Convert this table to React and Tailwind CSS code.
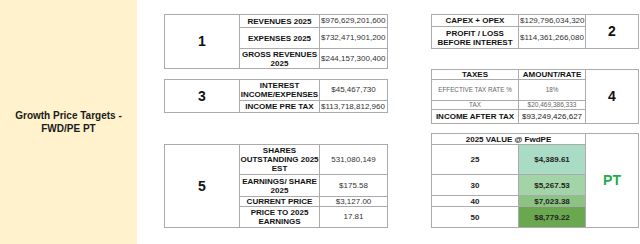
import React from 'react';

const Cell = ({ children, bg = 'bg-white', className = '' }) => (
    <div className={`${bg} flex items-center overflow-hidden whitespace-nowrap ${className}`}>
        {children}
    </div>
);

const Label = ({ children, bg, className = '' }) => (
    <Cell bg={bg} className={`justify-center text-center font-bold text-[8px] leading-[9px] ${className || 'text-[#111]'}`}>
        <span>{children}</span>
    </Cell>
);

const Value = ({ children, center, className = '' }) => (
    <Cell className={`text-[8px] ${center ? 'justify-center' : 'justify-start pl-px'} ${className || 'text-[#333]'}`}>
        {children}
    </Cell>
);

const Big = ({ children, className = '' }) => (
    <Cell className={`justify-center font-bold text-[14px] text-[#111] ${className}`}>{children}</Cell>
);

const App = () => {
    const fwdPe = [
        { pe: '25', value: '$4,389.61', bg: 'bg-[#aadcc5]' },
        { pe: '30', value: '$5,267.53', bg: 'bg-[#a3d4a8]' },
        { pe: '40', value: '$7,023.38', bg: 'bg-[#8cc282]' },
        { pe: '50', value: '$8,779.22', bg: 'bg-[#6aa84f]' },
    ];

    return (
        <div className="flex w-[640px] h-[244px] bg-white font-['Liberation_Sans',Arial,sans-serif]">
            {/* title strip */}
            <div className="w-[137px] h-full bg-[#fff2cc] flex items-center justify-center text-center">
                <p className="text-[10px] font-bold leading-[13px] text-[#1a1a1a]">
                    Growth Price Targets -<br />FWD/PE PT
                </p>
            </div>

            {/* left column */}
            <div className="ml-[27px] w-[224px] pt-[14px] flex flex-col">
                <div className="grid grid-cols-[74px_79px_67px] grid-rows-[12px_20px_19px] gap-px p-px bg-[#ababab]">
                    <Big className="row-span-3">1</Big>
                    <Label>REVENUES 2025</Label>
                    <Value>$976,629,201,600</Value>
                    <Label>EXPENSES 2025</Label>
                    <Value>$732,471,901,200</Value>
                    <Label>GROSS REVENUES<br />2025</Label>
                    <Value>$244,157,300,400</Value>
                </div>

                <div className="mt-[10px] grid grid-cols-[74px_79px_67px] grid-rows-[20px_11px] gap-px p-px bg-[#ababab]">
                    <Big className="row-span-2">3</Big>
                    <Label>INTEREST<br />INCOME/EXPENSES</Label>
                    <Value center>$45,467,730</Value>
                    <Label>INCOME PRE TAX</Label>
                    <Value>$113,718,812,960</Value>
                </div>

                <div className="mt-[31px] grid grid-cols-[74px_79px_67px] grid-rows-[29px_21px_9px_20px] gap-px p-px bg-[#ababab]">
                    <Big className="row-span-4">5</Big>
                    <Label>SHARES<br />OUTSTANDING 2025<br />EST</Label>
                    <Value center>531,080,149</Value>
                    <Label>EARNINGS/ SHARE<br />2025</Label>
                    <Value center>$175.58</Value>
                    <Label>CURRENT PRICE</Label>
                    <Value center>$3,127.00</Value>
                    <Label>PRICE TO 2025<br />EARNINGS</Label>
                    <Value center>17.81</Value>
                </div>
            </div>

            {/* right column */}
            <div className="ml-[43px] w-[208px] pt-[14px] flex flex-col">
                <div className="grid grid-cols-[86px_66px_52px] grid-rows-[11px_21px] gap-px p-px bg-[#ababab]">
                    <Label>CAPEX + OPEX</Label>
                    <Value>$129,796,034,320</Value>
                    <Big className="row-span-2">2</Big>
                    <Label>PROFIT / LOSS<br />BEFORE INTEREST</Label>
                    <Value>$114,361,266,080</Value>
                </div>

                <div className="mt-[20px] grid grid-cols-[86px_66px_52px] grid-rows-[9px_20px_8px_13px] gap-px p-px bg-[#ababab]">
                    <Label>TAXES</Label>
                    <Label>AMOUNT/RATE</Label>
                    <Big className="row-span-4">4</Big>
                    <Cell className="justify-center text-[6.3px] text-[#666]">EFFECTIVE TAX RATE %</Cell>
                    <Cell className="justify-center text-[6.3px] text-[#666]">18%</Cell>
                    <Cell className="justify-center text-[6.3px] text-[#666]">TAX</Cell>
                    <Cell className="justify-center text-[6.5px] text-[#666]">$20,469,386,333</Cell>
                    <Cell className="justify-center font-bold text-[8px] text-[#111]">INCOME AFTER TAX</Cell>
                    <Cell className="justify-center text-[8px] text-[#222]">$93,249,426,627</Cell>
                </div>

                <div className="mt-[9px] grid grid-cols-[86px_66px_52px] grid-rows-[10px_29px_20px_10px_20px] gap-px p-px bg-[#ababab]">
                    <Label className="col-span-2 text-[#111]">2025 VALUE @ FwdPE</Label>
                    <Cell className="row-span-5 justify-center font-bold text-[14px] text-[#22ab4c]">PT</Cell>
                    {fwdPe.map((row) => (
                        <React.Fragment key={row.pe}>
                            <Label className="text-[#222]">{row.pe}</Label>
                            <Label bg={row.bg} className="text-[#222]">{row.value}</Label>
                        </React.Fragment>
                    ))}
                </div>
            </div>
        </div>
    );
};

export default App;
